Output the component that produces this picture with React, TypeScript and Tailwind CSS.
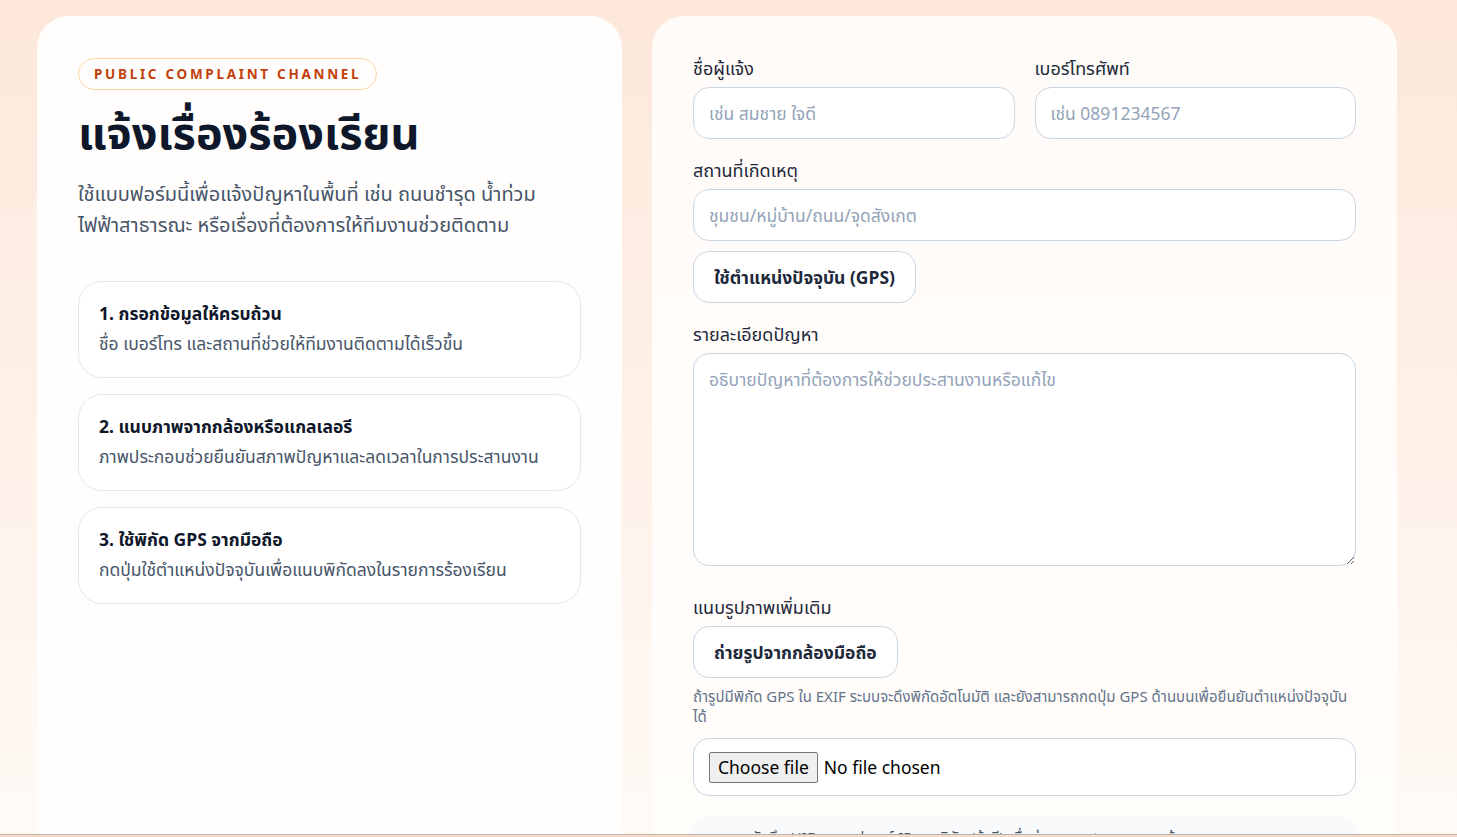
import React from "react";

const STEPS = [
  { title: "1. กรอกข้อมูลให้ครบถ้วน", desc: "ชื่อ เบอร์โทร และสถานที่ช่วยให้ทีมงานติดตามได้เร็วขึ้น" },
  { title: "2. แนบภาพจากกล้องหรือแกลเลอรี", desc: "ภาพประกอบช่วยยืนยันสภาพปัญหาและลดเวลาในการประสานงาน" },
  { title: "3. ใช้พิกัด GPS จากมือถือ", desc: "กดปุ่มใช้ตำแหน่งปัจจุบันเพื่อแนบพิกัดลงในรายการร้องเรียน" },
];

const inputCls =
  "w-full h-[52px] rounded-2xl border border-[#cbd5e1] bg-white px-[15px] text-[17.5px] text-slate-800 placeholder:text-[#94a3b8] outline-none";

function Label({ children }: { children: React.ReactNode }) {
  return <label className="block text-[18px] text-[#1e293b] mb-[7px] leading-6">{children}</label>;
}

export default function App() {
  return (
    <div
      className="min-h-screen h-[837px] overflow-hidden bg-gradient-to-b from-[#fde8da] to-[#fffaf6] text-slate-900"
      style={{ fontFamily: '"Noto Sans", "Noto Sans Thai", sans-serif' }}
    >
      <div className="flex gap-[30px] pl-[37px] pr-[60px] pt-4">
        {/* Intro */}
        <section className="w-[585px] shrink-0 h-[900px] bg-[#fffefd] rounded-[32px] px-[41px] pt-[42px]">
          <span className="inline-flex items-center h-8 px-[15px] rounded-full border border-[#fed7aa] text-[#c2410c] text-[13.5px] font-bold tracking-[0.2em]">
            PUBLIC COMPLAINT CHANNEL
          </span>
          <h1 className="mt-[14px] text-[45px] font-bold leading-[56px] text-[#0f172a]">แจ้งเรื่องร้องเรียน</h1>
          <p className="mt-[18px] text-[20px] leading-[31px] text-[#475569]">
            ใช้แบบฟอร์มนี้เพื่อแจ้งปัญหาในพื้นที่ เช่น ถนนชำรุด น้ำท่วม
            <br />
            ไฟฟ้าสาธารณะ หรือเรื่องที่ต้องการให้ทีมงานช่วยติดตาม
          </p>
          <div className="mt-[41px] flex flex-col gap-4 w-[503px]">
            {STEPS.map((s) => (
              <div key={s.title} className="h-[97px] rounded-3xl border border-[#e2e8f0] bg-white px-5 pt-[19px]">
                <div className="text-[17.5px] font-bold leading-6 text-[#0f172a]">{s.title}</div>
                <div className="mt-[6px] text-[17.5px] leading-6 text-[#475569]">{s.desc}</div>
              </div>
            ))}
          </div>
        </section>

        {/* Form */}
        <section className="w-[745px] shrink-0 h-[900px] bg-[#fffdfb]/90 rounded-[32px] px-[41px] pt-[40px]">
          <div className="grid grid-cols-2 gap-5">
            <div>
              <Label>ชื่อผู้แจ้ง</Label>
              <input className={inputCls} placeholder="เช่น สมชาย ใจดี" />
            </div>
            <div>
              <Label>เบอร์โทรศัพท์</Label>
              <input className={inputCls} placeholder="เช่น 0891234567" />
            </div>
          </div>

          <div className="mt-[19px]">
            <Label>สถานที่เกิดเหตุ</Label>
            <input className={inputCls} placeholder="ชุมชน/หมู่บ้าน/ถนน/จุดสังเกต" />
            <button className="mt-[10px] h-[52px] px-5 rounded-2xl border border-[#cbd5e1] bg-white text-[17.5px] font-bold text-[#1e293b]">
              ใช้ตำแหน่งปัจจุบัน (GPS)
            </button>
          </div>

          <div className="mt-[19px]">
            <Label>รายละเอียดปัญหา</Label>
            <textarea
              className="block w-full h-[213px] rounded-2xl border border-[#cbd5e1] bg-white px-[15px] py-[12px] text-[17.5px] text-slate-800 placeholder:text-[#94a3b8] outline-none"
              placeholder="อธิบายปัญหาที่ต้องการให้ช่วยประสานงานหรือแก้ไข"
            />
          </div>

          <div className="mt-[29px]">
            <Label>แนบรูปภาพเพิ่มเติม</Label>
            <button className="h-[52px] px-5 rounded-2xl border border-[#cbd5e1] bg-white text-[17.5px] font-bold text-[#1e293b]">
              ถ่ายรูปจากกล้องมือถือ
            </button>
            <p className="mt-[8px] text-[15px] leading-5 text-[#64748b]">
              ถ้ารูปมีพิกัด GPS ใน EXIF ระบบจะดึงพิกัดอัตโนมัติ และยังสามารถกดปุ่ม GPS ด้านบนเพื่อยืนยันตำแหน่งปัจจุบันได้
            </p>
            <div className="mt-[12px] h-[58px] rounded-2xl border border-[#cbd5e1] bg-white px-[15px] flex items-center gap-[6px]">
              <span className="px-[8px] h-[31px] flex items-center border border-[#767676] rounded-[2px] bg-[#efefef] text-[17.5px] text-black">
                Choose file
              </span>
              <span className="text-[17.5px] text-black">No file chosen</span>
            </div>
          </div>

          <div className="mt-5 rounded-2xl bg-[#f8fafc] px-[14px] py-[10px] text-[15px] text-[#475569]">
            ระบบจะบันทึก UID ของอุปกรณ์ IP และพิกัด (ถ้ามี) เพื่อช่วยตรวจสอบรายการแจ้ง
          </div>
        </section>
      </div>

      <div className="fixed bottom-0 left-0 right-0 h-[3px] border-t border-[#bdb3aa] bg-[#f3dccb]" />
    </div>
  );
}
